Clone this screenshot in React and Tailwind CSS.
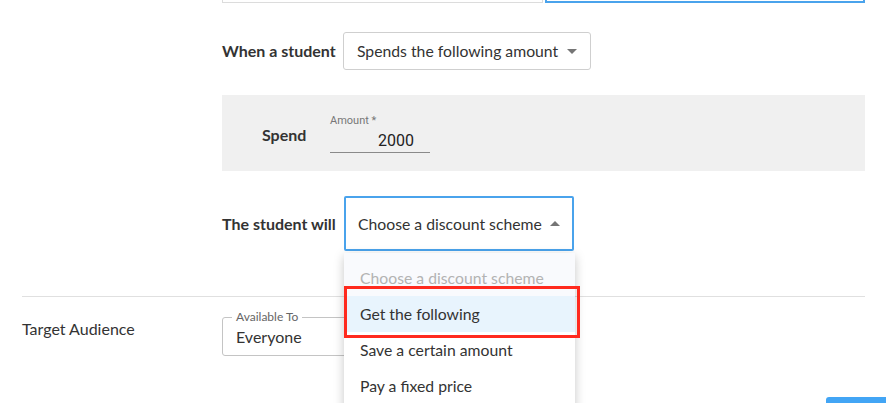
import React from 'react';

const Caret = ({ up = false }) => (
  <svg width="10" height="5" viewBox="0 0 10 5" className="shrink-0">
    <path d={up ? 'M0 5 L10 5 L5 0 Z' : 'M0 0 L10 0 L5 5 Z'} fill="#757575" />
  </svg>
);

const menuItems = ['Get the following', 'Save a certain amount', 'Pay a fixed price'];

export default function App() {
  return (
    <div className="relative w-[886px] h-[403px] overflow-hidden bg-white text-[#333] font-['Lato','Liberation_Sans',sans-serif]">
      <div className="pl-[22px] pr-[21px]">
        {/* upper section, indented into the content column */}
        <div className="ml-[200px]">
          {/* bottoms of the fields above */}
          <div className="flex gap-[2px]">
            <div className="w-[321px] h-[3px] border-x border-b border-[#dcdcdc]" />
            <div className="flex-1 h-[3px] border-x-2 border-b-2 border-[#4aa3ec]" />
          </div>

          {/* When a student */}
          <div className="flex items-center mt-[29px]">
            <span className="w-[121px] shrink-0 text-[16px] font-bold">When a student</span>
            <div className="w-[248px] h-[38px] flex items-center justify-between border border-[#cfcfcf] rounded-[3px] pl-[13px] pr-[13px] text-[15.75px]">
              <span>Spends the following amount</span>
              <Caret />
            </div>
          </div>

          {/* Spend panel */}
          <div className="mt-[25px] h-[76px] bg-[#f0f0f0] flex items-center pl-[40px]">
            <span className="text-[16px] font-bold w-[68px] mt-[3px]">Spend</span>
            <div className="w-[100px] mt-[1px]">
              <div className="text-[11px] text-[#777] font-['Roboto',sans-serif] leading-[14px]">Amount *</div>
              <div className="h-[22px] border-b border-[#8a8a8a] text-right pr-[16px] text-[16px] leading-[20px] text-[#222] font-['Roboto',sans-serif] mt-[3px]">
                2000
              </div>
            </div>
          </div>

          {/* The student will */}
          <div className="flex items-center mt-[25px]">
            <span className="w-[122px] shrink-0 text-[16px] font-bold">The student will</span>
            <div className="relative">
              <div className="w-[230px] h-[55px] flex items-center justify-between border-2 border-[#4aa3ec] rounded-[2px] pl-[12px] pr-[12px] text-[15.75px]">
                <span>Choose a discount scheme</span>
                <Caret up />
              </div>

              {/* open menu */}
              <div className="absolute z-10 left-0 top-[57px] w-[231px] h-[170px] bg-white shadow-[0_3px_10px_rgba(0,0,0,0.22)]">
                <div className="h-[43px] pt-[7px] bg-[#f9fafd] flex items-center px-[16px] text-[15.75px] text-[#b3b3b3]">
                  Choose a discount scheme
                </div>
                {menuItems.map((item, i) => (
                  <div
                    key={item}
                    className={`h-[36px] flex items-center px-[16px] text-[15.75px] text-[#333] ${i === 0 ? 'bg-[#e8f4fd]' : ''}`}
                  >
                    {item}
                  </div>
                ))}
              </div>

              {/* annotation box */}
              <div className="absolute z-20 left-0 top-[90px] w-[236px] h-[52px] border-[3px] border-[#ff2a1e]" />
            </div>
          </div>
        </div>

        <div className="mt-[45px] border-t border-[#e0e0e0]" />

        {/* Target Audience */}
        <div className="flex mt-[20px]">
          <div className="w-[200px] text-[16px]">Target Audience</div>
          <div className="relative w-[321px] h-[39px] border border-[#c4c4c4] rounded-[3px] flex items-end pl-[13px] pb-[6px]">
            <span className="absolute -top-[8px] left-[9px] px-[4px] bg-white text-[12px] leading-[14px] text-[#666]">
              Available To
            </span>
            <span className="text-[16px]">Everyone</span>
          </div>
        </div>
      </div>

      <div className="absolute right-0 bottom-0 w-[60px] h-[6px] bg-[#42a5f5] rounded-tl-[3px]" />
    </div>
  );
}
